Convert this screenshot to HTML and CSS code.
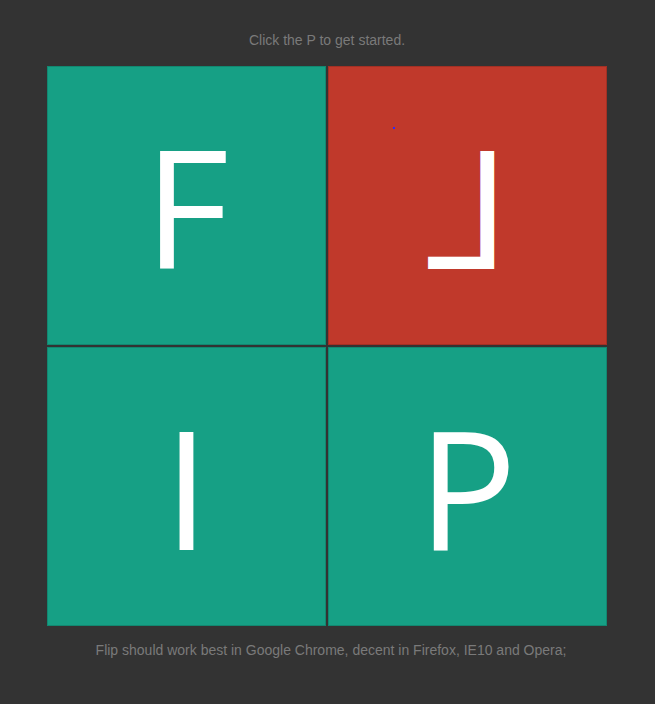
FILE: index.html
```html
<!DOCTYPE html>
<html>
<head>
<meta charset="utf-8">
<link rel="stylesheet" href="styles.css">
</head>
<body>
<p class="note note-top">Click the P to get started.</p>
<div class="board">
  <div class="tile tile-green">F</div>
  <div class="tile tile-red"><span class="mirror">L</span><span class="dot"></span></div>
  <div class="tile tile-green">I</div>
  <div class="tile tile-green">P</div>
</div>
<p class="note note-bottom">Flip should work best in Google Chrome, decent in Firefox, IE10 and Opera;</p>
</body>
</html>
```
FILE: styles.css
```css
html, body {
  margin: 0;
  padding: 0;
  background: #333333;
}
body {
  padding-top: 32px;
  padding-right: 1px;
  font-family: "Liberation Sans", Arial, sans-serif;
}
.note {
  margin: 0;
  text-align: center;
  font-size: 14px;
  line-height: 16px;
  color: #7a7a7a;
}
.note-bottom {
  margin-top: 16px;
  padding-left: 8px;
}
.board {
  width: 560px;
  margin: 18px auto 0;
  display: grid;
  grid-template-columns: 279px 279px;
  grid-template-rows: 279px 279px;
  gap: 2px;
}
.tile {
  position: relative;
  box-shadow: inset 0 0 0 1px rgba(0, 0, 0, 0.15);
  color: #ffffff;
  font-family: "Open Sans", sans-serif;
  font-size: 165px;
  line-height: 279px;
  text-align: center;
  overflow: hidden;
}
.tile-green {
  background: #16a085;
}
.tile-red {
  background: #c0392b;
}
.mirror {
  display: inline-block;
  transform: scaleX(-1);
}
.dot {
  position: absolute;
  left: 65px;
  top: 61px;
  width: 2px;
  height: 2px;
  background: #2a2aff;
}
```
